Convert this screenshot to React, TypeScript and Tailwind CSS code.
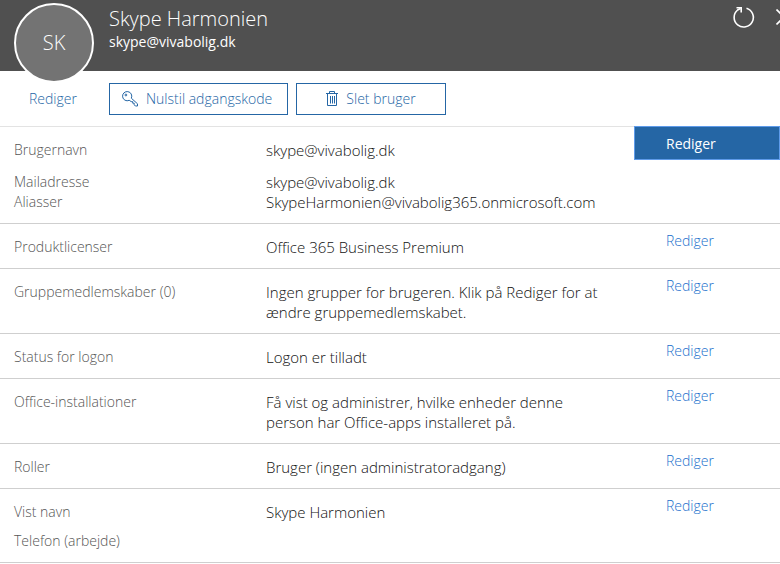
import type { ReactNode } from "react";
import clsx from "clsx";

type Field = {
  label: string;
  value?: string;
};

type Section = {
  id: string;
  groups: Field[][];
  gap?: string;
  active?: boolean;
};

const sections: Section[] = [
  {
    id: "brugernavn",
    active: true,
    gap: "gap-3",
    groups: [
      [{ label: "Brugernavn", value: "skype@vivabolig.dk" }],
      [
        { label: "Mailadresse", value: "skype@vivabolig.dk" },
        {
          label: "Aliasser",
          value: "SkypeHarmonien@vivabolig365.onmicrosoft.com",
        },
      ],
    ],
  },
  {
    id: "licenser",
    groups: [
      [{ label: "Produktlicenser", value: "Office 365 Business Premium" }],
    ],
  },
  {
    id: "grupper",
    groups: [
      [
        {
          label: "Gruppemedlemskaber (0)",
          value:
            "Ingen grupper for brugeren. Klik på Rediger for at ændre gruppemedlemskabet.",
        },
      ],
    ],
  },
  {
    id: "logon",
    groups: [[{ label: "Status for logon", value: "Logon er tilladt" }]],
  },
  {
    id: "office",
    groups: [
      [
        {
          label: "Office-installationer",
          value:
            "Få vist og administrer, hvilke enheder denne person har Office-apps installeret på.",
        },
      ],
    ],
  },
  {
    id: "roller",
    groups: [
      [{ label: "Roller", value: "Bruger (ingen administratoradgang)" }],
    ],
  },
  {
    id: "navn",
    gap: "gap-[9px]",
    groups: [
      [{ label: "Vist navn", value: "Skype Harmonien" }],
      [{ label: "Telefon (arbejde)" }],
    ],
  },
];

const KeyIcon = () => (
  <svg
    className="h-4 w-4"
    viewBox="0 0 16 16"
    fill="none"
    stroke="currentColor"
    aria-hidden="true"
  >
    <path d="M9.300 7.200A4.600 4.600 0 1 0 7.200 9.300L9.200 10.600h1.500v1.600h1.500v1.600l1.200 1.200h2.100v-2.200z" />
    <circle cx="3.900" cy="4" r=".9" />
  </svg>
);

const TrashIcon = () => (
  <svg
    className="h-4 w-3"
    viewBox="0 0 12 16"
    fill="none"
    stroke="currentColor"
    aria-hidden="true"
  >
    <path d="M0 2.500h12M3.500 2.500v-2h5v2M1.500 2.500v12h9v-12M4.500 5v7.500M6.500 5v7.500M8.500 5v7.500" />
  </svg>
);

const RefreshIcon = () => (
  <svg
    className="h-[22px] w-[22px]"
    viewBox="0 0 22 22"
    fill="none"
    stroke="currentColor"
    strokeWidth="1.6"
    aria-hidden="true"
  >
    <path d="M13.500 2.200A9.600 9.600 0 1 1 4.600 4L7.500 2.500" />
    <path d="M3.500 1.800h4.700v4.700" />
  </svg>
);

const CloseIcon = () => (
  <svg
    className="h-4 w-4"
    viewBox="0 0 16 16"
    fill="none"
    stroke="currentColor"
    strokeWidth="1.6"
    aria-hidden="true"
  >
    <path d="M.5.5l15 15M15.500.5l-15 15" />
  </svg>
);

const OutlineButton = ({
  className,
  children,
}: {
  className: string;
  children: ReactNode;
}) => (
  <button
    type="button"
    className={clsx(
      "flex h-8 items-center gap-2 border border-[#2566a5] text-[#2566a5]",
      className,
    )}
  >
    {children}
  </button>
);

const Row = ({ id, groups, gap, active }: Section) => (
  <section className="grid grid-cols-[minmax(0,1fr)_146px] items-start border-b border-[#cfcfcf]">
    <div className={clsx("flex flex-col pt-[13px] pb-[11px] pl-3.5", gap)}>
      {groups.map((fields) => (
        <dl key={fields[0].label}>
          {fields.map((field) => (
            <div
              key={field.label}
              className="grid grid-cols-[252px_minmax(0,1fr)] pr-6 font-light"
            >
              <dt className="text-[#555]">{field.label}</dt>
              <dd className="text-[15px] text-[#111]">{field.value}</dd>
            </div>
          ))}
        </dl>
      ))}
    </div>
    <button
      type="button"
      aria-label={`Rediger ${id}`}
      className={clsx(
        "-mt-px h-[34px] border pt-0.5 pl-[31px] text-left",
        active
          ? "border-[#5e9bea] bg-[#2566a5] text-white"
          : "border-transparent font-light text-[#1a6fcc]",
      )}
    >
      Rediger
    </button>
  </section>
);

const App = () => {
  return (
    <main className="min-h-screen overflow-x-hidden bg-white font-['Open_Sans',sans-serif] text-sm leading-5">
      <header className="flex h-[71px] items-start bg-[#505050] pl-3.5 text-white">
        <div className="mt-[3px] flex h-20 w-20 shrink-0 items-center justify-center rounded-full border-2 border-white bg-[#737373] text-xl font-light">
          SK
        </div>
        <div className="ml-[15px] grow pt-1.5">
          <h1 className="text-xl leading-[26px] font-light">Skype Harmonien</h1>
          <p>skype@vivabolig.dk</p>
        </div>
        <div className="-mr-3 flex shrink-0 items-center gap-[21px] pt-1.5">
          <button type="button" aria-label="Opdater">
            <RefreshIcon />
          </button>
          <button type="button" aria-label="Luk">
            <CloseIcon />
          </button>
        </div>
      </header>

      <div className="flex h-14 items-center border-b border-[#e3e3e3] font-light">
        <button
          type="button"
          className="w-[109px] pl-[29px] text-left text-[#2566a5]"
        >
          Rediger
        </button>
        <OutlineButton className="w-[179px] pl-3">
          <KeyIcon />
          Nulstil adgangskode
        </OutlineButton>
        <OutlineButton className="ml-2 w-[150px] justify-center">
          <TrashIcon />
          Slet bruger
        </OutlineButton>
      </div>

      {sections.map((section) => (
        <Row key={section.id} {...section} />
      ))}
    </main>
  );
};

export default App;
